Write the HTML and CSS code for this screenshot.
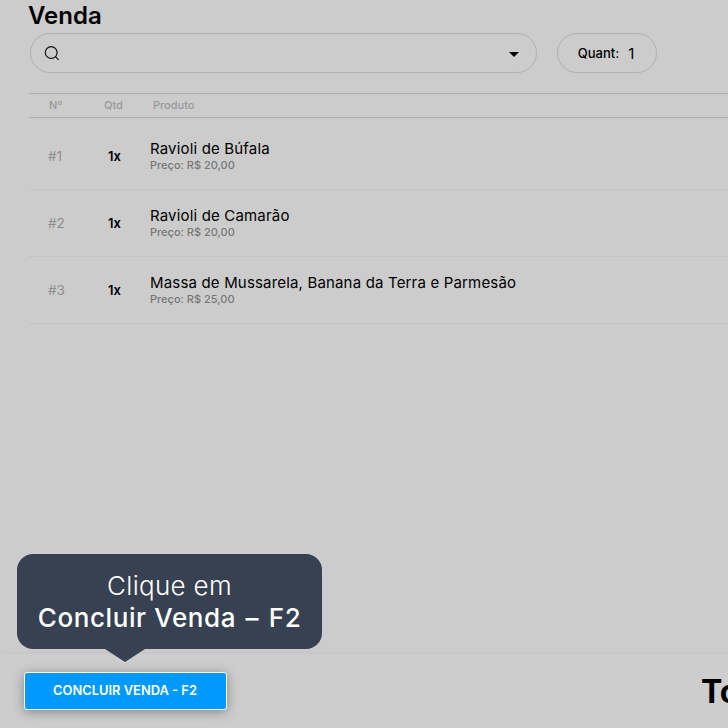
FILE: index.html
```html
<!DOCTYPE html>
<html lang="pt-BR">
<head>
<meta charset="UTF-8">
<meta name="viewport" content="width=device-width, initial-scale=1.0">
<title>Venda</title>
<link rel="stylesheet" href="styles.css">
</head>
<body>

<div class="pagina">
    <h1 class="titulo">Venda</h1>

    <div class="busca-linha">
        <div class="busca">
            <svg class="lupa" width="18" height="18" viewBox="0 0 18 18" fill="none" stroke="#111" stroke-width="1.2">
                <circle cx="7.2" cy="8.5" r="5.9"/>
                <path d="M11.5 12.7 L14.6 15.8"/>
            </svg>
            <span class="seta"></span>
        </div>
        <div class="quant">
            <span class="quant-label">Quant:</span>
            <span class="quant-valor">1</span>
        </div>
    </div>

    <div class="tabela-topo">
        <span class="col-num">Nº</span>
        <span class="col-qtd">Qtd</span>
        <span class="col-prod">Produto</span>
    </div>

    <div class="itens">
        <div class="item">
            <span class="item-num">#1</span>
            <span class="item-qtd">1x</span>
            <div>
                <div class="item-nome">Ravioli de Búfala</div>
                <div class="item-preco">Preço: R$ 20,00</div>
            </div>
        </div>
        <div class="item">
            <span class="item-num">#2</span>
            <span class="item-qtd">1x</span>
            <div>
                <div class="item-nome">Ravioli de Camarão</div>
                <div class="item-preco">Preço: R$ 20,00</div>
            </div>
        </div>
        <div class="item">
            <span class="item-num">#3</span>
            <span class="item-qtd">1x</span>
            <div>
                <div class="item-nome">Massa de Mussarela, Banana da Terra e Parmesão</div>
                <div class="item-preco">Preço: R$ 25,00</div>
            </div>
        </div>
    </div>
</div>

<div class="rodape">
    <button class="concluir">CONCLUIR VENDA - F2</button>
    <span class="total">Total</span>
    <div class="dica">
        <div class="dica-linha1">Clique em</div>
        <div class="dica-linha2">Concluir Venda <span class="traco">–</span> F2</div>
    </div>
</div>

</body>
</html>
```

FILE: styles.css
```css
html, body {
    margin: 0;
    height: 100%;
    overflow: hidden;
}

body {
    display: flex;
    flex-direction: column;
    background-color: #cccccc;
    font-family: Inter, "Liberation Sans", sans-serif;
    color: #000;
}

.pagina {
    flex: 1;
    padding: 0 0 0 29px;
    min-width: 760px;
}

.titulo {
    margin: 0 0 0 -1px;
    height: 33px;
    font-size: 24px;
    line-height: 31px;
    font-weight: 600;
}

.busca-linha {
    display: flex;
    gap: 20px;
    margin-left: 1px;
}

.busca {
    width: 507px;
    height: 40px;
    box-sizing: border-box;
    border: 1px solid #b0b0b0;
    border-radius: 20px;
    display: flex;
    align-items: center;
    justify-content: space-between;
    padding: 0 17px 0 13px;
}

.seta {
    width: 0;
    height: 0;
    border-left: 5px solid transparent;
    border-right: 5px solid transparent;
    border-top: 5px solid #000;
    margin-top: 3px;
}

.quant {
    width: 100px;
    height: 40px;
    box-sizing: border-box;
    border: 1px solid #b0b0b0;
    border-radius: 20px;
    display: flex;
    align-items: center;
    justify-content: center;
    gap: 9px;
    padding-right: 2px;
}

.quant-label {
    font-size: 13px;
    font-weight: 500;
}

.quant-valor {
    font-size: 15px;
    font-weight: 400;
}

.tabela-topo {
    display: flex;
    align-items: center;
    height: 23px;
    margin-top: 20px;
    border-top: 1px solid #aeaeae;
    border-bottom: 1px solid #aeaeae;
    font-size: 11px;
    font-weight: 500;
    color: #999999;
}

.tabela-topo span {
    margin-bottom: 1px;
}

.col-num {
    width: 75px;
    padding-left: 20px;
    box-sizing: border-box;
}

.col-qtd {
    width: 49px;
}

.itens {
    padding-top: 5px;
}

.item {
    display: flex;
    align-items: center;
    height: 66px;
    border-bottom: 1px solid #c3c3c3;
}

.item-num {
    width: 79px;
    padding-left: 19px;
    box-sizing: border-box;
    font-size: 13.5px;
    color: #8c8c8c;
}

.item-qtd {
    width: 42px;
    font-size: 13px;
    font-weight: 600;
}

.item-nome {
    font-size: 15px;
    line-height: 17px;
    font-weight: 400;
    letter-spacing: 0.17px;
}

.item-preco {
    font-size: 11px;
    line-height: 16px;
    font-weight: 500;
    color: #777777;
}

.rodape {
    position: relative;
    flex: none;
    height: 74px;
    background-color: #cdcdcd;
    box-shadow: 0 -2px 6px rgba(0, 0, 0, 0.03);
    display: flex;
    align-items: center;
    padding-left: 24px;
    min-width: 800px;
}

.concluir {
    width: 203px;
    height: 38px;
    box-sizing: border-box;
    padding: 0 1px 2px 0;
    border: 1px solid #fff;
    border-radius: 3px;
    background-color: #0099ff;
    color: #fff;
    font-family: inherit;
    font-size: 12.9px;
    font-weight: 600;
    box-shadow: 0 2px 12px rgba(0, 0, 0, 0.35);
}

.total {
    margin-left: 474px;
    font-size: 32px;
    font-weight: 700;
}

.dica {
    position: absolute;
    left: 17px;
    bottom: 79px;
    width: 305px;
    height: 95px;
    box-sizing: border-box;
    padding-top: 16px;
    background-color: #374151;
    border-radius: 16px;
    color: #fff;
    text-align: center;
}

.dica::after {
    content: "";
    position: absolute;
    left: 88px;
    bottom: -13px;
    border-left: 20px solid transparent;
    border-right: 20px solid transparent;
    border-top: 13px solid #374151;
}

.dica-linha1 {
    font-size: 26px;
    line-height: 32px;
    font-weight: 300;
    letter-spacing: 0.3px;
}

.dica-linha2 {
    font-size: 26px;
    line-height: 32px;
    font-weight: 500;
    letter-spacing: 0.6px;
}

.traco {
    margin: 0 2px;
}
```
